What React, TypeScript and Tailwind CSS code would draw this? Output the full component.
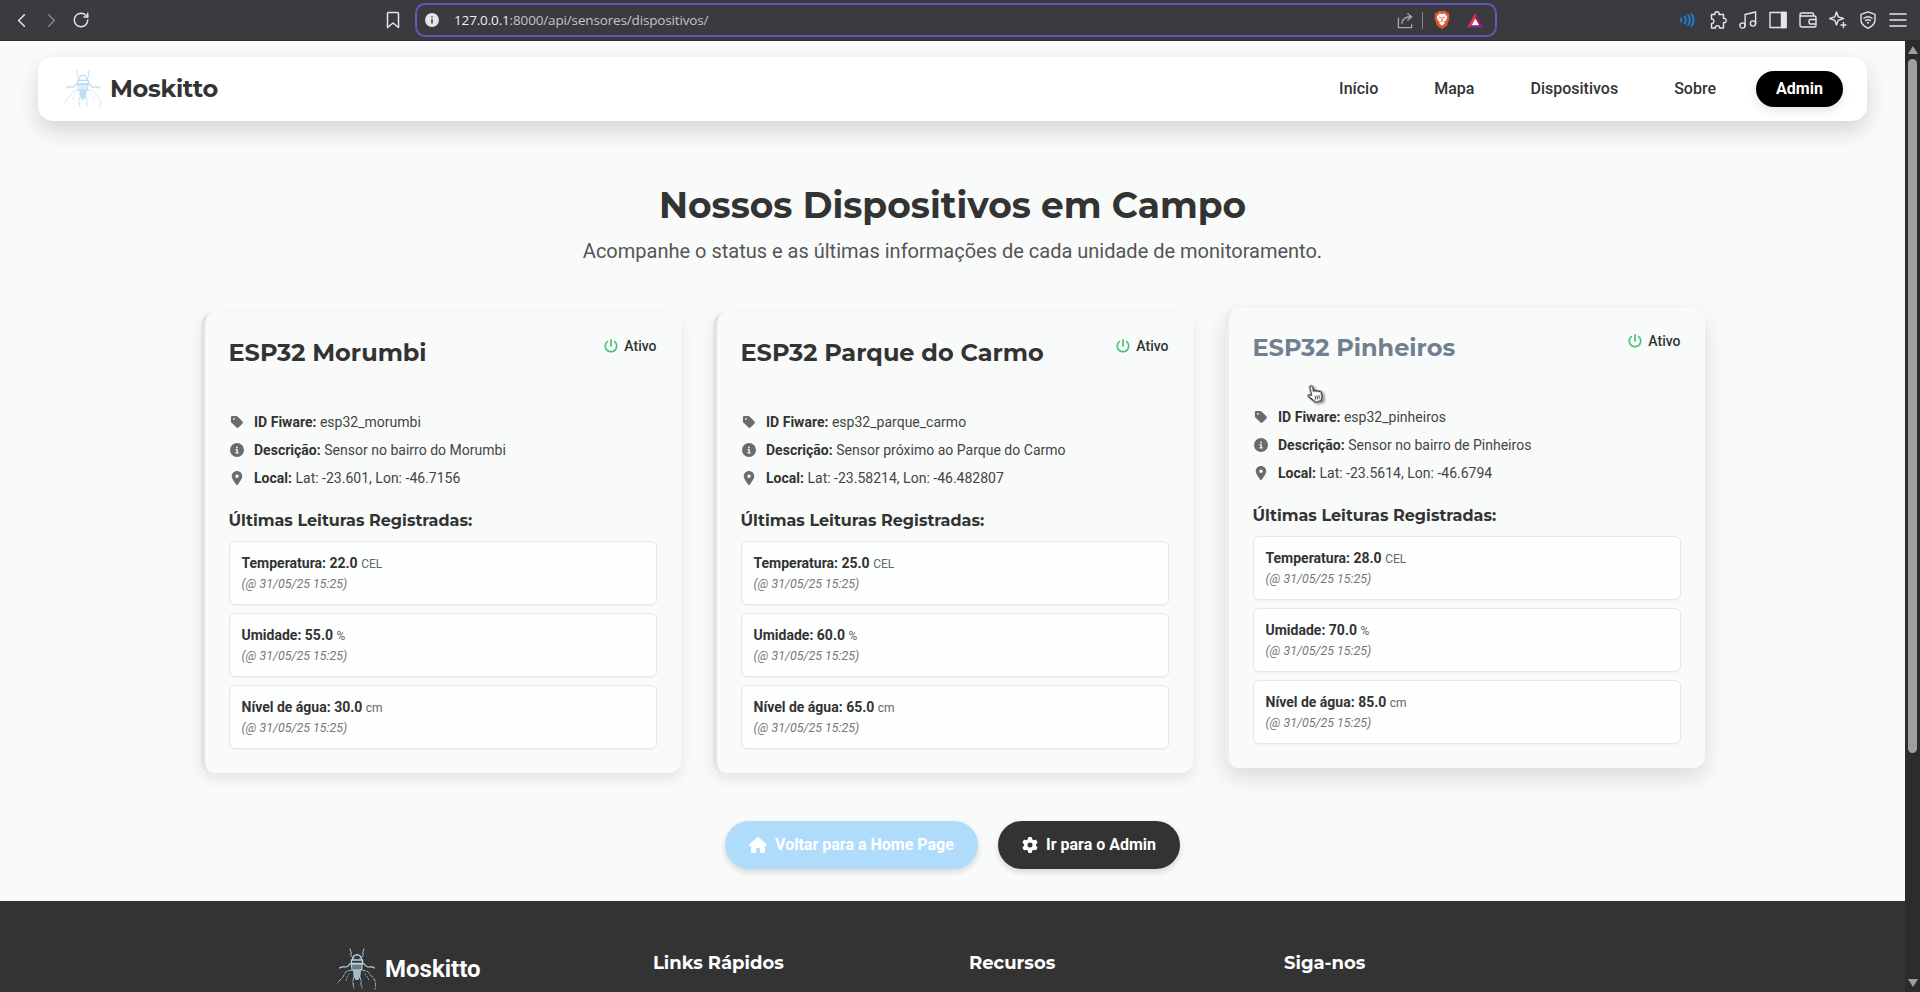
import React from "react";
import { FaTag, FaCircleInfo, FaLocationDot, FaPowerOff, FaHouse, FaGear } from "react-icons/fa6";
import { ChevronLeft, ChevronRight, RotateCw } from "lucide-react";

type Reading = { label: string; value: string; unit: string };
type Device = { name: string; id: string; desc: string; local: string; readings: Reading[]; hovered?: boolean };

const readings = (t: string, u: string, n: string): Reading[] => [
  { label: "Temperatura", value: t, unit: "CEL" },
  { label: "Umidade", value: u, unit: "%" },
  { label: "Nível de água", value: n, unit: "cm" },
];

const devices: Device[] = [
  { name: "ESP32 Morumbi", id: "esp32_morumbi", desc: "Sensor no bairro do Morumbi", local: "Lat: -23.601, Lon: -46.7156", readings: readings("22.0", "55.0", "30.0") },
  { name: "ESP32 Parque do Carmo", id: "esp32_parque_carmo", desc: "Sensor próximo ao Parque do Carmo", local: "Lat: -23.58214, Lon: -46.482807", readings: readings("25.0", "60.0", "65.0") },
  { name: "ESP32 Pinheiros", id: "esp32_pinheiros", desc: "Sensor no bairro de Pinheiros", local: "Lat: -23.5614, Lon: -46.6794", readings: readings("28.0", "70.0", "85.0"), hovered: true },
];

const heading = "font-['Montserrat','Inter',sans-serif]";

function Bug({ className }: { className: string }) {
  return (
    <svg viewBox="0 0 40 42" className={className} fill="none" stroke="currentColor" strokeWidth="1" strokeLinecap="round">
      <path d="M13 1c0 2 2 3 1 5s1 3 3 4M27 1c0 2-2 3-1 5s-1 3-3 4" />
      <path d="M15.500 12c0-7 9-7 9 0M14.500 12h11v3.500h-11z" strokeWidth="1.300" />
      <path d="M14.500 16h11l-1 6h-9z" fill="currentColor" fillOpacity=".45" />
      <path d="M16 22h8l-.5 6-2 4h-3l-2-4z" fill="currentColor" fillOpacity=".85" stroke="none" />
      <path d="M14.500 15c-2 0-3 4-5.500 4s-4-1-6.500 1M25.500 15c2 0 3 4 5.500 4s4-1 6.500 1" strokeWidth="1.200" />
      <path d="M15 22c-4 1-6 1-7 3s-1 3-3 5-3 3-4 5M25 22c4 1 6 1 7 3s3 3 5 6 2 6 1 10" strokeDasharray="3 2" strokeWidth=".9" />
      <path d="M17 29c-1 3-1.500 4-1 6s0 3 1 5M23 29c1 3 1.500 4 1 6s1 3 1 5" strokeDasharray="4 1.500" strokeWidth=".9" />
      <path d="M12 26c-2 2-2 4-3 7M28 26c2 2 3 4 4 7" strokeDasharray="1 2" strokeWidth=".8" />
    </svg>
  );
}

function ToolbarIcon({ children }: { children: React.ReactNode }) {
  return (
    <svg viewBox="0 0 18 18" className="size-[18px]" fill="none" stroke="currentColor" strokeWidth="1.400" strokeLinejoin="round" strokeLinecap="round">
      {children}
    </svg>
  );
}

function BrowserBar() {
  return (
    <div className="flex h-[41px] shrink-0 items-center border-b border-[#2c2b30] bg-[#3b3a3f] text-[#e6e6e8]">
      <div className="flex w-[415px] shrink-0 items-center pl-[10px]">
        <ChevronLeft size={23} strokeWidth={1.6} />
        <ChevronRight size={23} strokeWidth={1.4} className="ml-[7px] text-[#88878c]" />
        <RotateCw size={18} strokeWidth={1.9} className="ml-[9px]" />
        <svg viewBox="0 0 14 18" className="ml-[296px] h-[18px] w-[14px]" fill="none" stroke="currentColor" strokeWidth="1.500" strokeLinejoin="round">
          <path d="M1.500 2.500a1 1 0 011-1h9a1 1 0 011 1V16.500L7 12l-5.500 4.500z" />
        </svg>
      </div>
      <div className="flex h-[34px] w-[1082px] shrink-0 items-center rounded-[10px] border-2 border-[#6258b8] pr-[11px] pl-[8px]">
        <svg viewBox="0 0 14 14" className="size-[14px]">
          <circle cx="7" cy="7" r="7" fill="#e4e2ea" />
          <path d="M7 6v4.500M7 3.300v1.200" stroke="#3b3a3f" strokeWidth="1.500" />
        </svg>
        <span className="ml-[15px] font-['Open_Sans',sans-serif] text-[13.500px] tracking-[-0.150px] text-[#c4c3c9]">
          <span className="text-[#f0eff4]">127.0.0.1</span>:8000/api/sensores/dispositivos/
        </span>
        <div className="ml-auto flex items-center">
          <svg viewBox="0 0 18 18" className="size-[17px] text-[#aaa9ae]" fill="none" stroke="currentColor" strokeWidth="1.400">
            <path d="M1.500 6v10.500h14V13M5 12.500c.5-5 3-7.500 9.500-7.500M11 1.500L15.500 5 11 9" />
          </svg>
          <span className="ml-2 h-[17px] w-px bg-[#88878c]" />
          <svg viewBox="0 0 16 18" className="ml-[11px] h-[18px] w-[16px]">
            <path d="M4.500 0h7l1.300 1.600 1.700-.1 1 2.500-.5 1.500.5 1.500-2.300 7.500L8 18l-5.200-3.500L.5 7 1 5.500.5 4l1-2.500 1.700.1z" fill="#e0572b" />
            <path d="M8 3l2.500-.6 2.700 3-1 4-2 1.500.5 1.600L8 14.800 5.300 12.500l.5-1.600-2-1.500-1-4 2.700-3z" fill="#fff" />
            <path d="M5 6l2 .8M11 6l-2 .8M8 6v3.600M6.500 10.500L8 9.600l1.500.9" stroke="#e0572b" strokeWidth=".9" fill="none" />
          </svg>
          <svg viewBox="0 0 18 16" className="ml-[17px] h-[15px] w-[17px]">
            <path d="M9 0L0 16h18z" fill="#8a1f6c" />
            <path d="M9 0L0 16l9-6z" fill="#e8413a" />
            <path d="M0 16h18l-9-4z" fill="#662d91" />
            <path d="M9 6l-4 7h8z" fill="#fff" />
          </svg>
        </div>
      </div>
      <div className="ml-auto flex items-center gap-[12px] pr-[13px]">
        <svg viewBox="0 0 18 18" className="size-[18px] text-[#1c7fd0]" fill="none" stroke="currentColor" strokeWidth="1.900" strokeLinecap="round">
          <path d="M2 7.500c.8 1 .8 2 0 3M5.500 5.500c1.800 2.200 1.800 4.800 0 7M9 4c2.300 3 2.300 7 0 10M12.500 3c2.600 3.700 2.600 8.300 0 12" />
        </svg>
        <ToolbarIcon>
          <path d="M2.500 3.500H6C5.500 1.800 6.300.8 8 .8s2.500 1 2 2.700h4.500v4c1.700-.5 2.700.4 2.700 2s-1 2.500-2.700 2V17h-4c.3-1.600-.6-2.400-2-2.400s-2.300.8-2 2.400h-4v-4.500c1.600.3 2.400-.7 2.400-2.200s-.8-2.500-2.400-2.200z" />
        </ToolbarIcon>
        <ToolbarIcon>
          <circle cx="3.500" cy="14.500" r="2.600" />
          <circle cx="14" cy="12.500" r="2.600" />
          <path d="M6.100 14.500V3.500L16.600 1v11.500" />
        </ToolbarIcon>
        <ToolbarIcon>
          <path d="M1 1.500h16v15H1z" />
          <path d="M12.500 1.500H17v15h-4.500z" fill="currentColor" />
        </ToolbarIcon>
        <ToolbarIcon>
          <path d="M1 3.500A1.500 1.500 0 012.500 2H13a1.500 1.500 0 011.500 1.500V5M1 3.500V14a2 2 0 002 2h12.500a1.500 1.500 0 001.500-1.500v-8A1.500 1.500 0 0015.500 5h-13A1.500 1.500 0 011 3.500zM17 8.500h-5.500a1.500 1.500 0 00-1.500 1.500v1.500a1.500 1.500 0 001.500 1.500H17" />
        </ToolbarIcon>
        <ToolbarIcon>
          <path d="M7.500 1l1.700 4.800L14.500 7.500 9.200 9.300 7.500 14 5.800 9.300.7 7.500l5.100-1.700zM14.500 11.500v5M12 14h5" />
        </ToolbarIcon>
        <ToolbarIcon>
          <path d="M9 .8l7 2.500v5.500c0 4-3 6.800-7 8.500-4-1.700-7-4.500-7-8.500V3.300zM5 7.300c2.400-1.800 5.600-1.800 8 0M6.600 9.500c1.500-1 3.300-1 4.800 0M8.500 11.800h1" />
        </ToolbarIcon>
        <ToolbarIcon>
          <path d="M1 3h16M1 9h16M1 15h16" />
        </ToolbarIcon>
      </div>
    </div>
  );
}

function DeviceCard({ d }: { d: Device }) {
  return (
    <div
      className={
        d.hovered
          ? "flex h-[460px] -translate-y-[5px] flex-col rounded-xl border-l-4 border-[#eceeee] bg-[#f9fbfa] px-6 shadow-[0_9px_22px_rgba(0,0,0,0.13)]"
          : "flex h-[460px] flex-col rounded-xl border-l-4 border-[#e2e4e4] bg-[#f9fbfa] px-6 shadow-[0_6px_14px_rgba(0,0,0,0.09)]"
      }
    >
      <div className="flex h-[95px] justify-between pt-6">
        <h2 className={`${heading} text-[24px] leading-8 font-bold ${d.hovered ? "text-[#708090]" : "text-[#333]"}`}>{d.name}</h2>
        <div className="-mt-px flex h-5 items-center gap-[6px] text-[14px] font-medium text-[#333]">
          <FaPowerOff size={14} className="text-[#4cc27a]" />
          Ativo
        </div>
      </div>
      <div className="text-[14px] leading-7 tracking-[0.010px] text-[#444]">
        {[
          { I: FaTag, l: "ID Fiware:", v: d.id },
          { I: FaCircleInfo, l: "Descrição:", v: d.desc },
          { I: FaLocationDot, l: "Local:", v: d.local },
        ].map(({ I, l, v }) => (
          <div key={l} className="flex items-center">
            <span className="mr-2 flex w-[17.500px] justify-center"><I size={14} className="text-[#6b6b6b]" /></span>
            <span><b className="font-bold text-[#333]">{l}</b> {v}</span>
          </div>
        ))}
      </div>
      <h3 className={`${heading} mt-[17px] mb-[8px] text-[16px] leading-[24px] font-bold text-[#333]`}>Últimas Leituras Registradas:</h3>
      <div className="flex flex-col gap-2">
        {d.readings.map((r) => (
          <div key={r.label} className="h-16 rounded-md border border-[#e6e8e8] bg-[#fdfefe] px-3 pt-[11px] shadow-[0_1px_2px_rgba(0,0,0,0.04)]">
            <div className="text-[14px] leading-[20px] font-bold text-[#333]">
              {r.label}: {r.value} <span className="text-[12px] font-normal text-[#666]">{r.unit}</span>
            </div>
            <div className="text-[12.400px] leading-[20px] text-[#777] italic">(@ 31/05/25 15:25)</div>
          </div>
        ))}
      </div>
    </div>
  );
}

function Cursor() {
  return (
    <svg viewBox="0 0 18 20" className="absolute top-[384px] left-[1306px] z-10 h-[19px] w-[18px] -rotate-12 drop-shadow-[2px_2px_1px_rgba(0,0,0,0.4)]">
      <path d="M5 11V2.500a1.500 1.500 0 013 0V8a1.300 1.300 0 012.600 0v.6a1.300 1.300 0 012.500 0v.7a1.300 1.300 0 012.500.200V14c0 2-1.600 3-1.600 5H7c0-2-4.500-5.500-5.500-7.500-.5-1.300 1-2 2-1z" fill="#fff" stroke="#222" strokeWidth="1.200" />
      <path d="M8.500 12.500v4M10.500 12.500v4M12.500 12.500v4" stroke="#222" strokeWidth=".9" />
    </svg>
  );
}

export default function App() {
  return (
    <div className="relative flex h-[992px] w-[1920px] flex-col overflow-hidden font-['Roboto',sans-serif]">
      <BrowserBar />
      <div className="flex min-h-0 flex-1">
        <div className="flex w-[1905px] flex-col overflow-hidden bg-[#f9fbfa]">
          <header className="mx-[38px] mt-4 flex h-16 shrink-0 items-center rounded-[15px] bg-white pr-[24px] pl-[26px] shadow-[0_10px_22px_rgba(0,0,0,0.15)]">
            <Bug className="h-[40px] w-[38px] text-[#b5daf4]" />
            <span className={`${heading} ml-[8px] text-[24px] font-bold tracking-[-0.300px] text-[#333]`}>Moskitto</span>
            <nav className="ml-auto flex items-center gap-14 text-[16px] font-medium text-[#333]">
              <a>Início</a>
              <a>Mapa</a>
              <a>Dispositivos</a>
              <a>Sobre</a>
              <a className="-ml-4 flex h-9 w-[87px] items-center justify-center rounded-[18px] bg-black font-bold text-white shadow-[0_4px_10px_rgba(0,0,0,0.1)]">Admin</a>
            </nav>
          </header>
          <main className="flex h-[780px] shrink-0 flex-col items-center">
            <h1 className={`${heading} mt-[60px] text-[36px] leading-[48px] font-bold text-[#333]`}>Nossos Dispositivos em Campo</h1>
            <p className="mt-[7px] text-[20px] leading-[30px] text-[#555]">Acompanhe o status e as últimas informações de cada unidade de monitoramento.</p>
            <div className="mt-[47px] grid w-[1504px] grid-cols-3 gap-8">
              {devices.map((d) => <DeviceCard key={d.id} d={d} />)}
            </div>
            <div className="mt-12 flex gap-5 text-[16px] font-bold text-white">
              <a className="flex h-12 w-[253px] items-center justify-center gap-[8px] rounded-full bg-[#b0dcfc] shadow-[0_3px_6px_rgba(0,0,0,0.14)]"><FaHouse size={18} />Voltar para a Home Page</a>
              <a className="flex h-12 w-[182px] items-center justify-center gap-[8px] rounded-full bg-[#333] shadow-[0_3px_6px_rgba(0,0,0,0.14)]"><FaGear size={16} />Ir para o Admin</a>
            </div>
          </main>
          <footer className="flex flex-1 items-start bg-[#333] pl-[337px] text-white">
            <div className="mt-[47px] flex w-[316px] shrink-0 items-center">
              <Bug className="h-[42px] w-[40px] text-[#b8d4e6]" />
              <span className="ml-2 text-[24px] font-bold">Moskitto</span>
            </div>
            <h4 className={`${heading} mt-[50px] w-[316px] text-[18px] leading-6 font-bold`}>Links Rápidos</h4>
            <h4 className={`${heading} mt-[50px] w-[315px] text-[18px] leading-6 font-bold`}>Recursos</h4>
            <h4 className={`${heading} mt-[50px] text-[18px] leading-6 font-bold`}>Siga-nos</h4>
          </footer>
        </div>
        <div className="flex w-[15px] flex-col items-center bg-[#2c2c2c] py-[5px]">
          <svg viewBox="0 0 10 8" className="h-[8px] w-[10px]"><path d="M5 0l5 8H0z" fill="#9f9f9f" /></svg>
          <div className="mt-[5px] h-[694px] w-[9px] rounded-full bg-[#9f9f9f]" />
          <svg viewBox="0 0 10 8" className="mt-auto h-[8px] w-[10px]"><path d="M5 8l5-8H0z" fill="#9f9f9f" /></svg>
        </div>
      </div>
      <Cursor />
    </div>
  );
}
